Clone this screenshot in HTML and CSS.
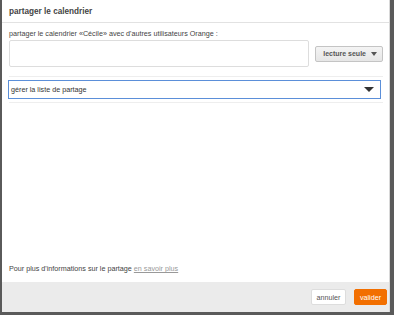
FILE: index.html
```html
<!DOCTYPE html>
<html lang="fr">
<head>
    <meta charset="UTF-8">
    <title>partager le calendrier</title>
    <link rel="stylesheet" href="styles.css">
</head>
<body>
    <div class="dialog">
        <div class="dialog-header">partager le calendrier</div>
        <div class="dialog-body">
            <label class="share-label" for="shareWith">partager le calendrier «Cécile» avec d'autres utilisateurs Orange :</label>
            <div class="share-row">
                <div class="share-input" id="shareWith"></div>
                <button class="rights-button">lecture seule <span class="caret"></span></button>
            </div>
            <div class="list-select">
                <span>gérer la liste de partage</span>
                <span class="caret caret-dark"></span>
            </div>
            <div class="spacer"></div>
            <p class="more-info">Pour plus d'informations sur le partage <a href="#">en savoir plus</a></p>
        </div>
        <div class="dialog-footer">
            <button class="btn-cancel">annuler</button>
            <button class="btn-ok">valider</button>
        </div>
    </div>
</body>
</html>
```

FILE: styles.css
```css
html, body {
    margin: 0;
    padding: 0;
    height: 100%;
}
body {
    background-color: #5a5a5a;
    font-family: Arial, "Liberation Sans", sans-serif;
    color: #333;
    padding: 0 4px 3px 2px;
    box-sizing: border-box;
}
.dialog {
    height: 100%;
    background-color: #fff;
    display: flex;
    flex-direction: column;
    border-right: 1px solid #d8d8d8;
    box-sizing: border-box;
}
.dialog-header {
    font-size: 8.2px;
    font-weight: bold;
    color: #444;
    padding: 7px 7px 6px;
    border-bottom: 1px solid #e2e2e2;
}
.dialog-body {
    flex: 1;
    display: flex;
    flex-direction: column;
    padding: 6px 6px 0 7px;
}
.share-label {
    font-size: 7.2px;
    color: #444;
    margin-bottom: 2px;
}
.share-row {
    display: flex;
    align-items: center;
    gap: 6px;
    padding-bottom: 9px;
    border-bottom: 1px solid #eee;
}
.share-input {
    width: 300px;
    height: 25px;
    border: 1px solid #ddd;
    border-radius: 2px;
}
.rights-button {
    width: 68px;
    height: 16px;
    padding: 0 5px 0 7px;
    font-family: inherit;
    font-size: 7px;
    font-weight: bold;
    white-space: nowrap;
    color: #555;
    background: linear-gradient(#f4f4f4, #e6e6e6);
    border: 1px solid #c4c4c4;
    border-radius: 2px;
    display: flex;
    align-items: center;
    justify-content: space-between;
}
.caret {
    display: inline-block;
    width: 0;
    height: 0;
    margin-left: 5px;
    border-left: 3px solid transparent;
    border-right: 3px solid transparent;
    border-top: 4px solid #555;
}
.caret-dark {
    border-left-width: 5px;
    border-right-width: 5px;
    border-top: 5px solid #333;
}
.list-select {
    margin: 3px 2px 0 -1px;
    height: 17px;
    border: 1px solid #5b8fd9;
    display: flex;
    align-items: center;
    justify-content: space-between;
    padding: 0 6px 0 2px;
    font-size: 7.2px;
    color: #333;
}
.spacer {
    flex: 1;
    border-top: 1px solid #eee;
    margin-top: 3px;
}
.more-info {
    font-size: 7.2px;
    color: #444;
    margin: 0 0 9px;
}
.more-info a {
    color: #999;
}
.dialog-footer {
    background-color: #ebebeb;
    height: 30px;
    display: flex;
    align-items: center;
    justify-content: flex-end;
    gap: 8px;
    padding-right: 2px;
}
.dialog-footer button {
    font-family: inherit;
    font-size: 7.2px;
    height: 16px;
    border-radius: 2px;
    padding: 0;
}
.btn-cancel {
    width: 35px;
    background-color: #fff;
    border: 1px solid #ddd;
    color: #555;
}
.btn-ok {
    width: 33px;
    background-color: #f26f00;
    border: 1px solid #f26f00;
    color: #fff;
}
```
